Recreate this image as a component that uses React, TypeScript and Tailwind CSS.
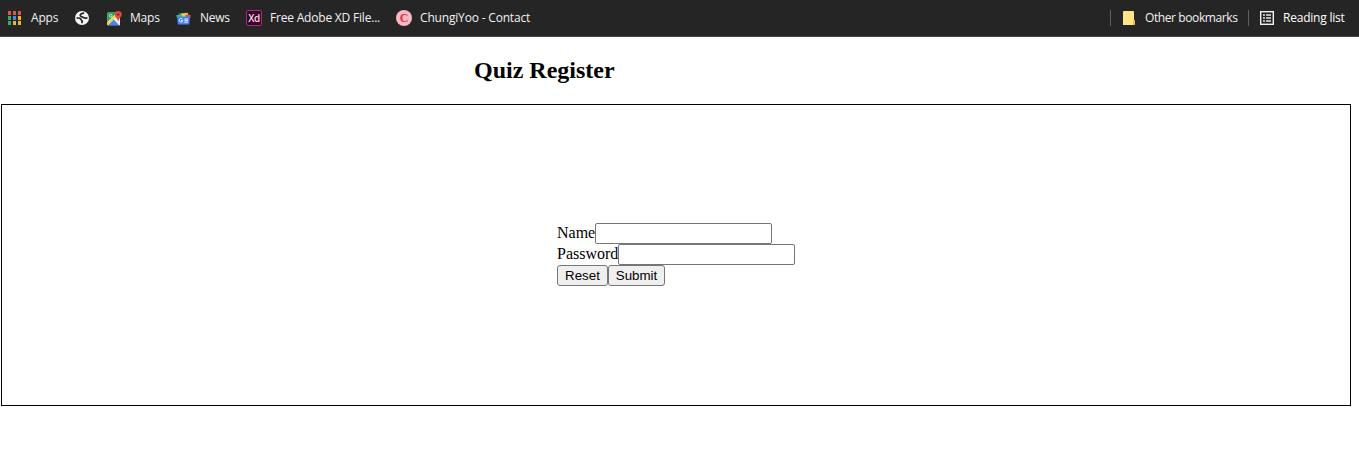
import type { ReactNode } from 'react';

function AppsIcon() {
  const colors = ['#e0524a', '#e0524a', '#e0524a', '#43a566', '#3f8fe8', '#eeb81c', '#43a566', '#eeb81c', '#eeb81c'];
  return (
    <svg width="13" height="14" viewBox="0 0 13 14" shapeRendering="crispEdges">
      {colors.map((c, i) => (
        <rect key={i} x={(i % 3) * 5} y={Math.floor(i / 3) * 5} width="3" height="4" fill={c} />
      ))}
    </svg>
  );
}

function GlobeIcon() {
  return (
    <svg width="14" height="14" viewBox="0 0 14 14">
      <circle cx="7" cy="7" r="7" fill="#f5f5f5" />
      <path d="M9.2 2.2C7 2.1 5.2 3.1 5.2 4.6c0 1.3 1.8 1.2 2.7 1.6.8.4 1.3 1 2.4 1 .8 0 1.4-.3 2.1-.6" fill="none" stroke="#252525" strokeWidth="1.7" />
      <path d="M1.5 7.2c1.4-.3 3.2-.2 4 .5.7.6.4 1.3 1.2 1.8.7.4.8 1.1 0 2.6" fill="none" stroke="#252525" strokeWidth="1.7" />
    </svg>
  );
}

function MapsIcon() {
  return (
    <svg width="15" height="15" viewBox="0 0 15 15">
      <rect x="0.3" y="1.5" width="12.7" height="12.7" rx="1" fill="#e8eaed" />
      <path d="M.3 2.5a1 1 0 0 1 1-1H10L.3 11Z" fill="#2ba15a" />
      <path d="M.3 11.5 8.6 4 10 5.4 1.2 14.2H.3Z" fill="#fbd13d" />
      <path d="M1.2 14.2 6.9 8.5 12.4 14.2Z" fill="#4285f4" />
      <path d="m6.9 8.5 2-2L13 10v4.2h-.6Z" fill="#eceff1" />
      <circle cx="3.7" cy="4.7" r="1.4" fill="none" stroke="#d6f2df" strokeWidth="0.9" />
      <path d="M11.2 0a3.6 3.6 0 0 1 3.6 3.6c0 2.4-2.7 3.5-3.6 6.8-.9-3.3-3.6-4.4-3.6-6.8A3.6 3.6 0 0 1 11.2 0Z" fill="#df4b3e" />
      <circle cx="11.2" cy="3.6" r="1.2" fill="#812b25" />
    </svg>
  );
}

function NewsIcon() {
  return (
    <svg width="15" height="13" viewBox="0 0 15 13">
      <path d="m2.5 1.5 8.8-.9v4H3Z" fill="#26994f" />
      <path d="m5 1.5 7-.6.6 4H5.5Z" fill="#f6c944" />
      <path d="m9.5 2.6 5.2.5-.5 3H9.5Z" fill="#dd5145" />
      <path d="m.2 3.2 5.6-.7.8 3.5H1Z" fill="#45b1b4" />
      <path d="M1.1 4.5h12.8L13.3 12.5H1.9Z" fill="#4386f3" />
      <path d="M6.3 7.1A1.75 1.75 0 1 0 6.7 8.6H5.1M8.4 7h3.6M8.4 8.6h3.6M8.4 10.2h3.6" fill="none" stroke="#e7f0ff" strokeWidth="1" />
    </svg>
  );
}

function XdIcon() {
  return (
    <span className="flex h-4 w-4 items-center justify-center rounded-[2px] border border-[#a52a82] bg-[#350721] pb-px font-['Open_Sans',sans-serif] text-[10px] leading-none font-semibold tracking-[-0.6px] text-[#f5d5ec]">
      Xd
    </span>
  );
}

function ContactIcon() {
  return (
    <span className="flex h-4 w-4 items-center justify-center rounded-full bg-[#f7b8c1] font-['Liberation_Serif',serif] text-[12px] leading-none font-bold text-[#d33248]">
      C
    </span>
  );
}

function FolderIcon() {
  return (
    <svg width="13" height="14" viewBox="0 0 13 14">
      <path d="M0 1a1 1 0 0 1 1-1h9a1 1 0 0 1 1 1v8l1 1v3a1 1 0 0 1-1 1H0Z" fill="#fde487" />
      <path d="M10 14v-4l1-1 1 1v3a1 1 0 0 1-1 1Z" fill="#e7bd47" />
    </svg>
  );
}

function ReadingIcon() {
  return (
    <svg width="14" height="14" viewBox="0 0 14 14">
      <rect x="0.7" y="0.7" width="12.6" height="12.6" fill="none" stroke="#f1f1f1" strokeWidth="1.4" />
      <path d="M3 3.2h2v1.6H3zM6 3.2h5v1.6H6zM3 6.2h2v1.6H3zM6 6.2h5v1.6H6zM3 9.2h2v1.6H3zM6 9.2h5v1.6H6z" fill="#e4e4e4" />
    </svg>
  );
}

function Bookmark({ icon, className, children }: { icon: ReactNode; className: string; children?: ReactNode }) {
  return (
    <div className={`flex h-9 shrink-0 items-center whitespace-nowrap ${className}`}>
      {icon}
      {children && <span>{children}</span>}
    </div>
  );
}

export default function App() {
  return (
    <div className="h-[474px] overflow-hidden bg-white font-['Liberation_Serif',serif] text-base text-black">
      <nav className="flex h-[37px] border-b border-[#4b4b4b] bg-[#252525] pl-2 font-['Open_Sans',sans-serif] text-[12px] text-[#f1f1f1]">
        <Bookmark icon={<AppsIcon />} className="w-[67px] gap-[10px] tracking-[-0.2px]">Apps</Bookmark>
        <Bookmark icon={<GlobeIcon />} className="w-8" />
        <Bookmark icon={<MapsIcon />} className="w-[69px] gap-2 tracking-[-0.2px]">Maps</Bookmark>
        <Bookmark icon={<NewsIcon />} className="w-[70px] gap-[9px] tracking-[-0.3px]">News</Bookmark>
        <Bookmark icon={<XdIcon />} className="w-[150px] gap-2 tracking-[-0.2px]">Free Adobe XD File...</Bookmark>
        <Bookmark icon={<ContactIcon />} className="gap-2 tracking-[-0.18px]">ChungiYoo - Contact</Bookmark>
        <div className="ml-auto flex h-9 items-center">
          <span className="h-4 w-px bg-[#606060]" />
          <Bookmark icon={<FolderIcon />} className="w-[137px] gap-[9px] pl-3 tracking-[-0.4px]">Other bookmarks</Bookmark>
          <span className="h-4 w-px bg-[#606060]" />
          <Bookmark icon={<ReadingIcon />} className="w-[110px] gap-[9px] pl-[11px] tracking-[-0.22px] text-white">Reading list</Bookmark>
        </div>
      </nav>
      <h2 className="mt-[19px] ml-[474px] h-7 text-[24px] leading-7 font-bold">Quiz Register</h2>
      <main className="mt-5 ml-px flex h-[302px] w-[1350px] items-center justify-center border border-black pb-[2px]">
        <form className="w-[238px] leading-[19px]" onSubmit={(e) => e.preventDefault()}>
          <label className="flex h-[21px]">
            Name
            <input className="h-[21px] w-[177px] rounded-[2px] border border-[#767676] bg-white px-0.5 font-['Liberation_Sans',sans-serif] text-[13.333px] outline-none" />
          </label>
          <label className="flex h-[21px]">
            Password
            <input type="password" className="h-[21px] w-[177px] shrink-0 rounded-[2px] border border-[#767676] bg-white px-0.5 font-['Liberation_Sans',sans-serif] text-[13.333px] outline-none" />
          </label>
          <div className="flex font-['Liberation_Sans',sans-serif] text-[13.333px]">
            <button type="reset" className="h-[21px] w-[51px] rounded-[3px] border border-[#767676] bg-[#efefef] leading-[19px]">Reset</button>
            <button type="submit" className="h-[21px] w-[57px] rounded-[3px] border border-[#767676] bg-[#efefef] leading-[19px]">Submit</button>
          </div>
        </form>
      </main>
    </div>
  );
}
